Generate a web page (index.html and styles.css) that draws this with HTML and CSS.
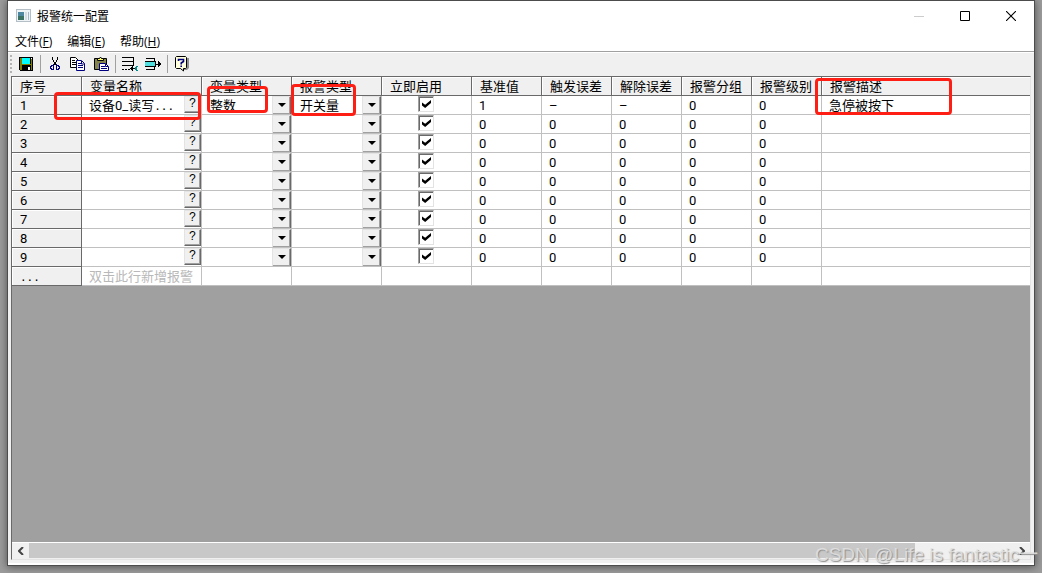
FILE: index.html
```
<!DOCTYPE html>
<html lang="zh-CN">
<head>
  <meta charset="utf-8">
  <title>报警统一配置</title>
  <link rel="stylesheet" href="styles.css">
</head>
<body>
  <div class="window">
    <header class="titlebar">
      <svg class="app-icon" width="16" height="16" viewBox="0 0 16 16" shape-rendering="crispEdges">
        <rect x="0" y="1" width="15" height="13" fill="#b4bec6"/>
        <rect x="1" y="2" width="13" height="11" fill="#eef3f6"/>
        <rect x="2" y="4" width="6" height="8" fill="#4d87a0"/>
        <rect x="2" y="8" width="6" height="4" fill="#3a7364"/>
        <rect x="9" y="4" width="2" height="8" fill="#d3dde6"/>
        <rect x="12" y="4" width="1" height="8" fill="#9fb8ca"/>
      </svg>
      <h1>报警统一配置</h1>
      <div class="window-buttons">
        <button type="button" aria-label="最小化" disabled><svg width="10" height="10" shape-rendering="crispEdges"><path d="M0 5.500h10" stroke="#ccc"/></svg></button>
        <button type="button" aria-label="最大化"><svg width="10" height="10"><path d="M.5 .5h9v9h-9z" fill="none" stroke="#000"/></svg></button>
        <button type="button" aria-label="关闭"><svg width="10" height="10"><path d="M0 0L10 10M10 0L0 10" stroke="#000" stroke-width="1.1"/></svg></button>
      </div>
    </header>

    <nav class="menubar">
      <a href="#">文件(<u>F</u>)</a>
      <a href="#">编辑(<u>E</u>)</a>
      <a href="#">帮助(<u>H</u>)</a>
    </nav>

    <div class="toolbar">
      <span class="grip"></span>
      <button type="button" aria-label="保存"><svg width="16" height="16" shape-rendering="crispEdges">
        <path d="M1 1h14v14H2l-1-1z" fill="#000"/><path d="M2 2h2v12H2zM13 3h1v11h-1zM3 8h10v1H3z" fill="#808000"/>
        <path d="M4 2h8v6H4z" fill="#0ff"/><path d="M10 11h2v3h-2zM13 2h1v1h-1z" fill="#fff"/></svg></button>
      <span class="separator"></span>
      <button type="button" aria-label="剪切"><svg width="16" height="16" shape-rendering="crispEdges">
        <path d="M5 1h1v3H5zM6 4h1v2H6zM7 6h2v3H7zM9 4h1v2H9zM10 1h1v3h-1z" fill="#000"/>
        <path d="M6 8h1v1H6zM9 8h1v1H9z" fill="#000080"/>
        <path d="M4.500 9.500h2v4h-2v-1h-1v-2h1zM9.500 9.500h2v1h1v2h-1v1h-2z" fill="none" stroke="#000080"/></svg></button>
      <button type="button" aria-label="复制"><svg width="16" height="16">
        <path d="M.5 1.500h5l3 3v7h-8z" fill="#fff" stroke="#000"/><path d="M2 4.500h3M2 6.500h5M2 8.500h4" stroke="#000"/>
        <path d="M6.500 4.500h5l3 3v7h-8z" fill="#fff" stroke="#000080"/><path d="M8 7.500h3M8 9.500h5M8 11.500h5M11.500 5v3h3" fill="none" stroke="#000080"/></svg></button>
      <button type="button" aria-label="粘贴"><svg width="16" height="16">
        <path d="M1.500 2.500h12v11h-12z" fill="#84844c" stroke="#000"/><path d="M4.500 4.500v-2h2l1-1.500 1 1.500h2v2z" fill="#ff6" stroke="#000"/>
        <path d="M6.500 7.500h6l3 3v4h-9z" fill="#fff" stroke="#000080"/><path d="M8 10.500h4M8 12.500h6M12.500 8v2.500H15" fill="none" stroke="#000080"/></svg></button>
      <span class="separator"></span>
      <button type="button" aria-label="新增行"><svg width="16" height="16" shape-rendering="crispEdges">
        <path d="M0 1.500h11M0 5.500h11M0 9.500h11.500V1" fill="none" stroke="#000"/><path d="M0 13.500h8" stroke="#000" stroke-dasharray="2 1"/>
        <path d="M8 12h1v-1h1v-1h1v2h2v1h-2v2h-1v-1H9v-1H8z" fill="#000"/><path d="M13 11h1v-1h2v1h-1v3h1v1h-2v-1h-1z" fill="#008b8b"/></svg></button>
      <button type="button" aria-label="插入行"><svg width="16" height="16" shape-rendering="crispEdges">
        <path d="M1 2.500h8.500V5M1 13.500h8.500V11" fill="none" stroke="#000"/><path d="M0 6h10v4H0z" fill="#4fdede"/>
        <path d="M0 5.500h10.500v5H0M11 8h5" fill="none" stroke="#000"/><path d="M13 5h1v1h1v1h1v2h-1v1h-1v1h-1z" fill="#000"/></svg></button>
      <span class="separator"></span>
      <button type="button" aria-label="帮助"><svg width="16" height="16">
        <path d="M4 2h11v10l-2 2H7z" fill="#909090"/><path d="M2.500 .5h9l1 1v10l-1 1h-2v2.500l-3-2.500h-4l-1-1v-10z" fill="#ffffdc" stroke="#000"/>
        <path d="M4.500 5V3.500h5v2L7.200 7v1.500M7.200 9.500v1.500" fill="none" stroke="#000080" stroke-width="1.600"/></svg></button>
    </div>

    <main class="grid-frame">
      <div class="grid-scroll">
        <table class="grid">
          <colgroup>
            <col class="c-index"><col class="c-name"><col class="c-type"><col class="c-type"><col class="c-type">
            <col class="c-num"><col class="c-num"><col class="c-num"><col class="c-num"><col class="c-num"><col>
          </colgroup>
          <thead>
            <tr><th>序号</th><th>变量名称</th><th>变量类型</th><th>报警类型</th><th>立即启用</th><th>基准值</th><th>触发误差</th><th>解除误差</th><th>报警分组</th><th>报警级别</th><th>报警描述</th></tr>
          </thead>
          <tbody id="rows"></tbody>
        </table>
      </div>
      <div class="scrollbar">
        <button type="button" aria-label="向左滚动"><svg width="6" height="8"><path d="M5 0L1 4l4 4" fill="none" stroke="#444" stroke-width="2"/></svg></button>
        <div class="track"><div class="thumb"></div></div>
        <button type="button" aria-label="向右滚动"><svg width="6" height="8"><path d="M1 0l4 4-4 4" fill="none" stroke="#444" stroke-width="2"/></svg></button>
      </div>
    </main>
  </div>

  <div class="mark mark-name"></div>
  <div class="mark mark-type"></div>
  <div class="mark mark-alarm"></div>
  <div class="mark mark-desc"></div>
  <div class="watermark">CSDN @Life is fantastic一</div>

  <script src="grid.js"></script>
</body>
</html>
```
FILE: styles.css
```
* {
  box-sizing: border-box;
}

body {
  margin: 0;
  height: 100vh;
  padding: 0 7px 7px;
  display: flex;
  overflow: hidden;
  position: relative;
  background: #9c9c9c;
  font: 12px "Open Sans", "Noto Sans CJK SC", sans-serif;
  color: #000;
}

button {
  padding: 0;
  border: 0;
  background: none;
  font: inherit;
  color: inherit;
}

svg {
  display: block;
}

.window {
  flex: 1;
  min-width: 0;
  display: flex;
  flex-direction: column;
  border: 1px solid #4c4c4c;
  background: #fff;
  box-shadow: 0 1px 8px rgba(0, 0, 0, 0.5);
}

/* title and menu */
.titlebar {
  height: 30px;
  display: flex;
  align-items: center;
  padding-left: 8px;
}

.titlebar h1 {
  margin: 0 0 0 5px;
  font-size: 12px;
  font-weight: normal;
}

.window-buttons {
  margin-left: auto;
  display: flex;
}

.window-buttons button {
  width: 46px;
  height: 28px;
  display: grid;
  place-items: center;
}

.menubar {
  height: 20px;
  display: flex;
  align-items: center;
  gap: 15px;
  padding-left: 7px;
}

.menubar a {
  color: #000;
  text-decoration: none;
}

.toolbar {
  height: 25px;
  display: flex;
  align-items: center;
  padding-left: 2px;
  border-top: 1px solid #a0a0a0;
  box-shadow: inset 0 1px #fff;
  background: #f0f0f0;
}

.toolbar button {
  width: 23px;
  height: 22px;
  display: grid;
  place-items: center;
}

.grip {
  width: 2px;
  height: 18px;
  margin-right: 2px;
  background: repeating-linear-gradient(#b4b4b4 0 2px, transparent 2px 4px);
}

.separator {
  width: 1px;
  height: 18px;
  margin: 0 2px 0 3px;
  background: #a0a0a0;
}

/* data grid */
.grid-frame {
  flex: 1;
  min-height: 0;
  display: flex;
  flex-direction: column;
  margin: 0 3px 5px;
  border: 1px solid #696969;
  border-right-color: #e3e3e3;
  border-bottom-color: #e3e3e3;
  box-shadow: 0 0 0 3px #f0f0f0;
}

.grid-scroll {
  flex: 1;
  min-height: 0;
  overflow: hidden;
  background: #a0a0a0;
}

.grid {
  width: 100%;
  table-layout: fixed;
  border-collapse: separate;
  border-spacing: 0;
  background: #fff;
  font: 13px/18px "Noto Sans CJK SC", sans-serif;
}

.c-index { width: 70px; }
.c-name { width: 120px; }
.c-type { width: 90px; }
.c-num { width: 70px; }

.grid th,
.grid td {
  height: 19px;
  padding: 0 0 0 7px;
  border-right: 1px solid #c0c0c0;
  border-bottom: 1px solid #c0c0c0;
  text-align: left;
  font-weight: normal;
  white-space: nowrap;
  overflow: hidden;
}

.grid th {
  padding-left: 8px;
  border-color: #696969;
  background: #f0f0f0;
  box-shadow: inset 1px 1px #fff;
}

.grid th:last-child,
.grid td:last-child {
  border-right: 0;
}

.num {
  font-family: Roboto, sans-serif;
  line-height: 1;
}

.dots {
  font-family: "DejaVu Sans Mono", monospace;
  font-size: 11px;
  line-height: 1;
}

.grid .hint {
  color: #b8b8b8;
}

.picker,
.combo {
  display: flex;
  height: 18px;
  position: relative;
}

.picker span {
  line-height: 18px;
}

.picker .text {
  flex: 1;
}

.picker button,
.combo::after {
  width: 17px;
  height: 17px;
  background: #f0f0f0;
  border: 1px solid;
  border-color: #e3e3e3 #696969 #696969 #e3e3e3;
  box-shadow: inset -1px -1px #a0a0a0;
}

.picker button {
  font: 12px/15px "Liberation Mono", monospace;
}

.combo::after {
  content: "";
  position: absolute;
  right: 0;
  top: 0;
  pointer-events: none;
}

.combo::before {
  content: "";
  position: absolute;
  z-index: 1;
  right: 5px;
  top: 7px;
  border: solid transparent;
  border-width: 4px 4px 0;
  border-top-color: #000;
  pointer-events: none;
}

.combo select {
  width: 100%;
  height: 18px;
  padding: 0 0 0 1px;
  border: 0;
  appearance: none;
  background: none;
  font: inherit;
  color: inherit;
}

.grid .check {
  padding: 0 1px 0 0;
}

.check input {
  display: block;
  appearance: none;
  width: 16px;
  height: 16px;
  margin: 0 auto 2px;
  border: 1px solid;
  border-color: #a0a0a0 #e3e3e3 #e3e3e3 #a0a0a0;
  box-shadow: inset 1px 1px #696969;
  background: #fff;
}

.check input:checked::before {
  content: "";
  display: block;
  width: 9px;
  height: 8px;
  margin: 3px;
  background: #000;
  clip-path: polygon(0 30%, 35% 60%, 100% 0, 100% 36%, 35% 100%, 0 68%);
}

.scrollbar {
  height: 17px;
  display: flex;
  border-top: 1px solid #fff;
  background: #f0f0f0;
}

.scrollbar button {
  width: 17px;
  display: grid;
  place-items: center;
}

.track {
  flex: 1;
}

.thumb {
  width: 90%;
  height: 15px;
  background: #c8c8c8;
}

/* highlights over the grid */
.mark {
  position: absolute;
  border: 3px solid #ff1e14;
  border-radius: 4px;
}

.mark-name { left: 54px; top: 92px; width: 147px; height: 28px; }
.mark-type { left: 207px; top: 86px; width: 61px; height: 27px; }
.mark-alarm { left: 291px; top: 84px; width: 65px; height: 32px; }
.mark-desc { left: 815px; top: 78px; width: 137px; height: 37px; }

.watermark {
  position: absolute;
  right: 4px;
  bottom: 5px;
  font: 19px/26px "Liberation Sans", "Noto Sans CJK SC", sans-serif;
  color: rgba(225, 225, 225, 0.9);
  text-shadow: 1px 1px 1px #909090;
}
```
FILE: grid.js
```
var rows = [
  { name: '设备0_读写...', type: '整数', alarm: '开关量', values: ['1', '–', '–', '0', '0'], desc: '急停被按下' }
];
while (rows.length < 9) {
  rows.push({ name: '', type: '', alarm: '', values: ['0', '0', '0', '0', '0'], desc: '' });
}

function combo(label, value) {
  return '<td><div class="combo"><select aria-label="' + label + '"><option>' + value + '</option></select></div></td>';
}

// latin characters use their own faces
function latin(text) {
  return text.replace(/[0-9_–]+/g, '<span class="num">$&</span>')
    .replace(/\.+/g, '<span class="dots">$&</span>');
}

var html = '';
rows.forEach(function (row, i) {
  html += '<tr><th>' + latin(String(i + 1)) + '</th>';
  html += '<td><div class="picker"><span class="text">' + latin(row.name) + '</span><button type="button" aria-label="选择变量">?</button></div></td>';
  html += combo('变量类型', row.type) + combo('报警类型', row.alarm);
  html += '<td class="check"><input type="checkbox" aria-label="立即启用" checked></td>';
  row.values.forEach(function (value) {
    html += '<td>' + latin(value) + '</td>';
  });
  html += '<td>' + row.desc + '</td></tr>';
});
html += '<tr><th>' + latin('...') + '</th><td class="hint">双击此行新增报警</td>' + '<td></td>'.repeat(9) + '</tr>';
document.getElementById('rows').innerHTML = html;
```
